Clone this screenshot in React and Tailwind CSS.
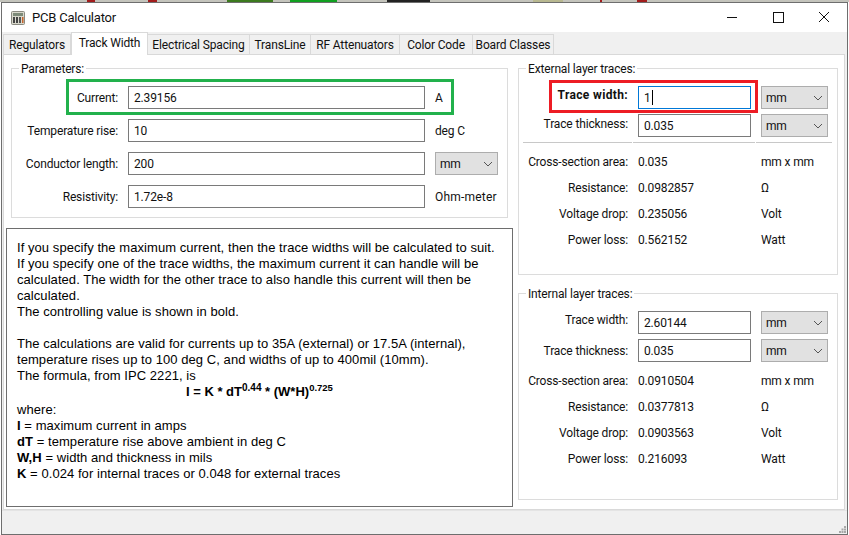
const tabs = [
  { name: 'Regulators', w: 'w-[68px]' },
  { name: 'Track Width', w: 'w-[77px]', active: true },
  { name: 'Electrical Spacing', w: 'w-[102px]' },
  { name: 'TransLine', w: 'w-[61px]' },
  { name: 'RF Attenuators', w: 'w-[89px]' },
  { name: 'Color Code', w: 'w-[73px]' },
  { name: 'Board Classes', w: 'w-[81px]' },
];

function Chevron() {
  return (
    <svg width="10" height="6" viewBox="0 0 10 6" fill="none" stroke="#555" strokeWidth="1"><path d="M1 1l4 4 4-4" /></svg>
  );
}

function Combo({ className = '' }) {
  return (
    <div className={`flex h-[23px] items-center justify-between border border-[#adadad] bg-[#e1e1e1] px-[4px] pt-px ${className}`}>
      <span>mm</span>
      <Chevron />
    </div>
  );
}

function Field({ value, focused, className = '', children }) {
  return (
    <div className={`flex h-[23px] items-center bg-white px-[5px] border ${focused ? 'border-[#0078d7]' : 'border-[#7a7a7a]'} ${className}`}>
      {value}{children}
    </div>
  );
}

function ParamRow({ label, value, children, className = '' }) {
  return (
    <div className={`flex items-center ${className}`}>
      <span className="w-[106px] whitespace-nowrap text-right">{label}</span>
      <Field value={value} className="ml-[10px] w-[297px]" />
      {children}
    </div>
  );
}

function TraceInput({ label, value, bold, focused, labelClass = '', className = '' }) {
  return (
    <div className={`flex items-center ${className}`}>
      <span className={`w-[109px] whitespace-nowrap text-right ${labelClass} ${bold ? 'font-bold tracking-[0.35px]' : ''}`}>{label}</span>
      <Field value={value} focused={focused} className="ml-[10px] w-[113px]">
        {focused && <span className="ml-px inline-block h-[15px] w-px bg-black" />}
      </Field>
      <Combo className="ml-[10px] w-[67px]" />
    </div>
  );
}

function ResultRow({ label, value, unit, className = '' }) {
  return (
    <div className={`flex h-[16px] items-center ${className}`}>
      <span className="w-[109px] whitespace-nowrap text-right">{label}</span>
      <span className="ml-[10px] w-[123px]">{value}</span>
      <span className="whitespace-nowrap">{unit}</span>
    </div>
  );
}

function TraceGroup({ title, rows, inputs, divider, className = '' }) {
  return (
    <fieldset className={`h-[215px] border border-[#dcdcdc] ${className}`}>
      <legend className="ml-[7px] translate-y-px px-[2px] leading-[16px]">{title}</legend>
      <div className="pt-[10px]">
        <TraceInput {...inputs[0]} />
        <TraceInput {...inputs[1]} className="mt-[5px]" />
        {divider && (
          <div className="ml-[4px] mt-[5px] flex h-px w-[309px] gap-px">
            <div className="w-[109px] bg-[#c8c8c8]" />
            <div className="w-[122px] bg-[#c8c8c8]" />
            <div className="w-[76px] bg-[#c8c8c8]" />
          </div>
        )}
        <ResultRow {...rows[0]} className="mt-[11px]" />
        <ResultRow {...rows[1]} className="mt-[10px]" />
        <ResultRow {...rows[2]} className="mt-[10px]" />
        <ResultRow {...rows[3]} className="mt-[10px]" />
      </div>
    </fieldset>
  );
}

export default function App() {
  return (
    <div className="relative h-[535px] w-[849px] overflow-hidden bg-white font-['Roboto',sans-serif] text-[12px] leading-[16px] tracking-[-0.15px] text-[#111]">
      {/* bit of the desktop showing above the window */}
      <svg className="block" width="849" height="2" viewBox="0 0 849 2">
        <rect width="849" height="2" fill="#c4c4bc" />
        <rect x="87" width="8" height="2" fill="#a21c1c" />
        <rect x="148" width="9" height="2" fill="#a21c1c" />
        <rect x="227" width="46" height="2" fill="#3c7a1e" />
        <rect x="290" width="47" height="2" fill="#10a020" />
        <rect x="387" width="43" height="2" fill="#222" />
        <rect x="533" width="30" height="2" fill="#b8b890" />
        <rect x="600" width="2" height="2" fill="#a21c1c" />
        <rect x="637" width="10" height="2" fill="#a21c1c" />
      </svg>
      <div className="mx-px flex h-[533px] flex-col border border-[#6e6e6e] bg-[#f0f0f0]">
        {/* title bar */}
        <div className="flex h-[29px] items-center bg-white">
          <svg className="ml-[9px]" width="14" height="14" viewBox="0 0 14 14">
            <rect x="0.5" y="0.5" width="13" height="13" rx="1" fill="#d8d8cc" stroke="#8a8a80" />
            <rect x="2" y="2" width="10" height="3" fill="#7d8a78" />
            <rect x="2" y="6" width="2" height="6" fill="#444" />
            <rect x="5" y="6" width="2" height="6" fill="#444" />
            <rect x="8" y="6" width="2" height="6" fill="#555" />
            <rect x="11" y="6" width="1.5" height="6" fill="#c4622d" />
          </svg>
          <span className="ml-[7px] text-[13px] tracking-[-0.2px]">PCB Calculator</span>
          <div className="ml-auto flex items-center">
            <svg width="46" height="29" viewBox="0 0 46 29" stroke="#111" fill="none"><path d="M18 14.5h10" /></svg>
            <svg width="46" height="29" viewBox="0 0 46 29" stroke="#111" fill="none"><rect x="18.5" y="9.5" width="10" height="10" /></svg>
            <svg width="46" height="29" viewBox="0 0 46 29" stroke="#111" fill="none"><path d="M18 9l10 10M28 9l-10 10" /></svg>
          </div>
        </div>
        {/* tabs */}
        <div className="flex h-[22px] items-end pl-[1px]">
          {tabs.map((t) => (
            t.active
              ? <div key={t.name} className={`relative z-10 -mb-px flex h-[23px] items-center justify-center border border-b-0 border-[#d9d9d9] bg-white pb-[2px] ${t.w}`}>{t.name}</div>
              : <div key={t.name} className={`flex h-[20px] items-center justify-center border border-b-0 border-l-0 first:border-l border-[#d9d9d9] ${t.w}`}>{t.name}</div>
          ))}
        </div>
        {/* page */}
        <div className="ml-px mr-[2px] flex h-[456px] border border-[#d9d9d9] bg-white">
          <div className="ml-[2px] w-[507px]">
            <fieldset className="ml-[5px] mt-[5px] h-[158px] w-[497px] border border-[#dcdcdc]">
              <legend className="ml-[7px] translate-y-px px-[2px] leading-[16px]">Parameters:</legend>
              <div className="pt-[10px]">
                <ParamRow label="Current:" value="2.39156">
                  <span className="ml-[10px]">A</span>
                </ParamRow>
                <ParamRow label="Temperature rise:" value="10" className="mt-[10px]">
                  <span className="ml-[10px]">deg C</span>
                </ParamRow>
                <ParamRow label="Conductor length:" value="200" className="mt-[10px]">
                  <Combo className="ml-[10px] w-[63px]" />
                </ParamRow>
                <ParamRow label="Resistivity:" value="1.72e-8" className="mt-[10px]">
                  <span className="ml-[10px] whitespace-nowrap tracking-[0.2px]">Ohm-meter</span>
                </ParamRow>
              </div>
            </fieldset>
            <div className="mt-[10px] h-[279px] w-[507px] border border-[#6e6e6e] pl-[10px] pt-[11px] font-['Liberation_Sans',sans-serif] text-[13px] leading-[16px] tracking-[0.06px] text-black">
              <p>If you specify the maximum current, then the trace widths will be calculated to suit.</p>
              <p>If you specify one of the trace widths, the maximum current it can handle will be</p>
              <p>calculated. The width for the other trace to also handle this current will then be</p>
              <p>calculated.</p>
              <p>The controlling value is shown in bold.</p>
              <p className="h-[16px]" />
              <p>The calculations are valid for currents up to 35A (external) or 17.5A (internal),</p>
              <p>temperature rises up to 100 deg C, and widths of up to 400mil (10mm).</p>
              <p>The formula, from IPC 2221, is</p>
              <p className="h-[18px] pl-[169px] font-bold tracking-normal">I = K * dT<sup className="text-[10px]">0.44</sup> * (W*H)<sup className="text-[9.5px]">0.725</sup></p>
              <p>where:</p>
              <p><b>I</b> = maximum current in amps</p>
              <p><b>dT</b> = temperature rise above ambient in deg C</p>
              <p><b>W,H</b> = width and thickness in mils</p>
              <p><b>K</b> = 0.024 for internal traces or 0.048 for external traces</p>
            </div>
          </div>
          <div className="ml-[5px] mt-[5px] w-[320px]">
            <TraceGroup
              title="External layer traces:"
              divider
              inputs={[
                { label: 'Trace width:', value: '1', bold: true, focused: true, labelClass: '-translate-y-[3px]' },
                { label: 'Trace thickness:', value: '0.035', labelClass: '-translate-y-[2px]' },
              ]}
              rows={[
                { label: 'Cross-section area:', value: '0.035', unit: 'mm x mm' },
                { label: 'Resistance:', value: '0.0982857', unit: 'Ω' },
                { label: 'Voltage drop:', value: '0.235056', unit: 'Volt' },
                { label: 'Power loss:', value: '0.562152', unit: 'Watt' },
              ]}
            />
            <TraceGroup
              title="Internal layer traces:"
              className="mt-[10px]"
              inputs={[
                { label: 'Trace width:', value: '2.60144', labelClass: '-translate-y-[3px]' },
                { label: 'Trace thickness:', value: '0.035' },
              ]}
              rows={[
                { label: 'Cross-section area:', value: '0.0910504', unit: 'mm x mm' },
                { label: 'Resistance:', value: '0.0377813', unit: 'Ω' },
                { label: 'Voltage drop:', value: '0.0903563', unit: 'Volt' },
                { label: 'Power loss:', value: '0.216093', unit: 'Watt' },
              ]}
            />
          </div>
        </div>
        {/* status bar */}
        <div className="flex flex-1 items-end justify-end border-t border-[#e4e4e4]">
          <svg className="mb-px mr-px" width="7" height="7" viewBox="0 0 7 7" fill="#a8a8a8">
            <rect x="5" y="0" width="2" height="2" />
            <rect x="2.5" y="2.5" width="2" height="2" />
            <rect x="5" y="2.5" width="2" height="2" />
            <rect x="0" y="5" width="2" height="2" />
            <rect x="2.5" y="5" width="2" height="2" />
            <rect x="5" y="5" width="2" height="2" />
          </svg>
        </div>
      </div>
      {/* annotations drawn over the window */}
      <div className="absolute left-[66px] top-[79px] h-[36px] w-[388px] border-[3px] border-[#22b14c]" />
      <div className="absolute left-[549px] top-[80px] h-[33px] w-[209px] border-[3px] border-[#ed1c24]" />
    </div>
  );
}
